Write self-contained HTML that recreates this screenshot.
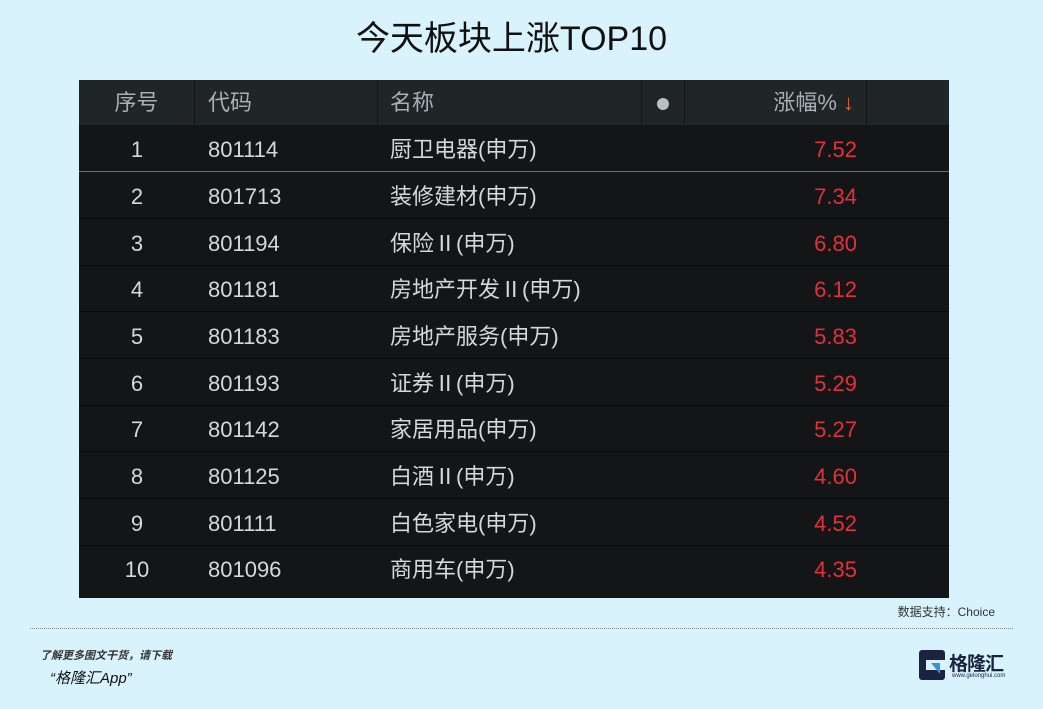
<!DOCTYPE html>
<html><head><meta charset="utf-8">
<style>
*{margin:0;padding:0;box-sizing:border-box}
body{width:1043px;height:709px;background:#d9f3fd;position:relative;overflow:hidden;font-family:"Liberation Sans","Noto Sans CJK SC",sans-serif}
.title{position:absolute;top:11px;left:0;width:1023px;text-align:center;font-size:34px;color:#111;font-weight:normal}
.tbl{position:absolute;left:79px;top:80px;width:870px;height:518px;background:#141517}
.hdr{position:absolute;left:0;top:0;width:870px;height:45px;background:#202527;color:#a9b0b4;font-size:22px}
.hdr div{position:absolute;top:0;height:45px;line-height:45px;border-right:1px solid #141618}
.row{position:absolute;left:0;width:870px;height:46.7px;border-bottom:1px solid #0a0b0c;color:#d4d8da;font-size:22px;line-height:50px}
.row span{position:absolute}
.c1{left:0;width:116px;text-align:center}
.c2{left:129px}
.c3{left:311px}
.c5{right:92px;color:#e3303c}
.foot1{position:absolute;right:48px;top:603px;font-size:12px;color:#333}
.dash{position:absolute;left:30px;top:628px;width:983px;border-top:1px dotted #888}
</style></head><body>
<div class="title">今天板块上涨TOP10</div>
<div class="tbl">
<div class="hdr">
<div style="left:0;width:116px;text-align:center">序号</div>
<div style="left:116px;width:183px;padding-left:13px">代码</div>
<div style="left:299px;width:264px;padding-left:12px">名称</div>
<div style="left:563px;width:43px;text-align:center"><span style="display:inline-block;width:12px;height:12px;border-radius:6px;background:#b9c0c4;vertical-align:middle"></span></div>
<div style="left:606px;width:182px;text-align:right;padding-right:12px">涨幅% <span style="color:#e06a1c">↓</span></div>
</div>
<div class="row" style="top:45px;border-bottom:1px solid #6b7073"><span class="c1">1</span><span class="c2">801114</span><span class="c3">厨卫电器(申万)</span><span class="c5">7.52</span></div>
<div class="row" style="top:92px"><span class="c1">2</span><span class="c2">801713</span><span class="c3">装修建材(申万)</span><span class="c5">7.34</span></div>
<div class="row" style="top:139px"><span class="c1">3</span><span class="c2">801194</span><span class="c3">保险Ⅱ(申万)</span><span class="c5">6.80</span></div>
<div class="row" style="top:185px"><span class="c1">4</span><span class="c2">801181</span><span class="c3">房地产开发Ⅱ(申万)</span><span class="c5">6.12</span></div>
<div class="row" style="top:232px"><span class="c1">5</span><span class="c2">801183</span><span class="c3">房地产服务(申万)</span><span class="c5">5.83</span></div>
<div class="row" style="top:279px"><span class="c1">6</span><span class="c2">801193</span><span class="c3">证券Ⅱ(申万)</span><span class="c5">5.29</span></div>
<div class="row" style="top:325px"><span class="c1">7</span><span class="c2">801142</span><span class="c3">家居用品(申万)</span><span class="c5">5.27</span></div>
<div class="row" style="top:372px"><span class="c1">8</span><span class="c2">801125</span><span class="c3">白酒Ⅱ(申万)</span><span class="c5">4.60</span></div>
<div class="row" style="top:419px"><span class="c1">9</span><span class="c2">801111</span><span class="c3">白色家电(申万)</span><span class="c5">4.52</span></div>
<div class="row" style="top:465px;border-bottom:none"><span class="c1">10</span><span class="c2">801096</span><span class="c3">商用车(申万)</span><span class="c5">4.35</span></div>
</div>
<div class="foot1">数据支持：Choice</div>
<div class="dash"></div>
<div style="position:absolute;left:40px;top:647px;font-size:11px;font-style:italic;font-weight:bold;color:#333">了解更多图文干货，请下载</div>
<div style="position:absolute;left:50px;top:667px;font-size:15px;font-style:italic;color:#111">“格隆汇App”</div>
<div style="position:absolute;left:919px;top:650px;width:26px;height:30px;background:#1a2340;border-radius:3px"></div>
<div style="position:absolute;left:926px;top:660px;width:19px;height:10px;background:#d9f3fd"></div>
<div style="position:absolute;left:931px;top:663px;width:9px;height:11px;background:#3a8fe0;clip-path:polygon(0 0,100% 0,100% 100%)"></div>
<div style="position:absolute;left:949px;top:649px;font-size:19px;font-weight:bold;color:#1a2340;letter-spacing:-1px">格隆汇</div>
<div style="position:absolute;left:952px;top:673px;font-size:6px;color:#1a2340">www.gelonghui.com</div>
</body></html>
